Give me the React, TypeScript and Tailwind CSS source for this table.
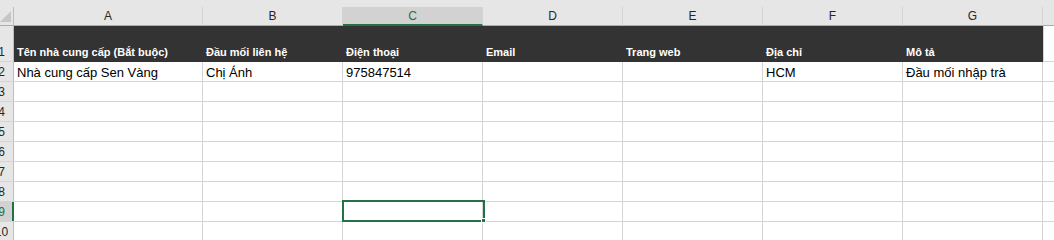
import React from "react";

const GREEN = "#217346";
const COLS = [
  { key: "A", w: 189 },
  { key: "B", w: 140 },
  { key: "C", w: 140 },
  { key: "D", w: 140 },
  { key: "E", w: 140 },
  { key: "F", w: 140 },
  { key: "G", w: 140 },
];

const HEADERS = [
  "Tên nhà cung cấp (Bắt buộc)",
  "Đầu mối liên hệ",
  "Điện thoại",
  "Email",
  "Trang web",
  "Địa chỉ",
  "Mô tả",
];

const ROW2 = ["Nhà cung cấp Sen Vàng", "Chị Ánh", "975847514", "", "", "HCM", "Đầu mối nhập trà"];

const font = { fontFamily: '"Liberation Sans", Arial, sans-serif' };

function RowNumber({ n, h, selected }: { n: number; h: number; selected?: boolean }) {
  return (
    <div
      className={`relative w-[14px] shrink-0 overflow-hidden border-b border-[#d4d4d4] ${
        selected ? "bg-[#d2d2d2]" : "bg-[#e6e6e6]"
      }`}
      style={{ height: h }}
    >
      <div
        className={`absolute right-0 top-0 bottom-0 ${selected ? "w-[2px] bg-[#217346]" : "w-px bg-[#bdbdbd]"}`}
      />
      <div
        className={`ml-[-11px] flex h-full w-[25px] items-end justify-center pb-[2px] text-[12px] leading-[14px] ${
          selected ? "text-[#217346]" : "text-[#262626]"
        }`}
      >
        {n}
      </div>
    </div>
  );
}

function DataRow({ n, values, selected }: { n: number; values?: string[]; selected?: boolean }) {
  return (
    <div className="flex h-[20px]">
      <RowNumber n={n} h={20} selected={selected} />
      {COLS.map((c, i) => (
        <div
          key={c.key}
          className="flex shrink-0 items-end overflow-visible whitespace-nowrap border-b border-r border-[#d4d4d4] bg-white pb-[1px] pl-[3px] text-[13px] leading-[15px] text-black"
          style={{ width: c.w }}
        >
          {values ? values[i] : ""}
        </div>
      ))}
      <div className="flex-1 border-b border-[#d4d4d4] bg-white" />
    </div>
  );
}

export default function App() {
  return (
    <div className="relative h-[240px] w-[1054px] overflow-hidden bg-white" style={font}>
      {/* column letters */}
      <div className="h-[26px] bg-[#e6e6e6] pt-[7px]">
        <div className="flex h-[19px]">
          <div className="relative w-[14px] shrink-0 border-r border-[#bdbdbd] border-b border-b-[#ababab]">
            <svg className="absolute left-0 top-[4px]" width="12" height="12" viewBox="0 0 12 12">
              <polygon points="11,0 11,11 0,11" fill="#c6c6c6" />
            </svg>
          </div>
          {COLS.map((c) => {
            const sel = c.key === "C";
            return (
              <div
                key={c.key}
                className={`flex shrink-0 items-center justify-center border-r text-[12px] leading-[14px] ${
                  sel
                    ? "border-[#d4d4d4] border-b-2 border-b-[#217346] bg-[#d2d2d2] pt-[1px] text-[#217346]"
                    : "border-[#d4d4d4] border-b border-b-[#ababab] text-[#262626]"
                }`}
                style={{ width: c.w }}
              >
                {c.key}
              </div>
            );
          })}
          <div className="flex-1 border-b border-[#ababab]" />
        </div>
      </div>

      {/* row 1: dark header */}
      <div className="flex h-[36px]">
        <RowNumber n={1} h={36} />
        {COLS.map((c, i) => (
          <div
            key={c.key}
            className="flex shrink-0 items-end whitespace-nowrap bg-[#333333] pb-[3px] pl-[3px] text-[11px] font-bold leading-[13px] text-white"
            style={{ width: c.w }}
          >
            {HEADERS[i]}
          </div>
        ))}
        <div className="flex-1 border-b border-l border-[#d4d4d4] bg-white" />
      </div>

      <DataRow n={2} values={ROW2} />
      {[3, 4, 5, 6, 7, 8].map((n) => (
        <DataRow key={n} n={n} />
      ))}
      <DataRow n={9} selected />
      <DataRow n={10} />

      {/* active cell C9 */}
      <div
        className="absolute left-[342px] top-[200px] h-[22px] w-[143px] border-2"
        style={{ borderColor: GREEN }}
      />
      <div className="absolute left-[481px] top-[218px] h-[5px] w-[5px] border border-white bg-[#217346]" />
    </div>
  );
}
